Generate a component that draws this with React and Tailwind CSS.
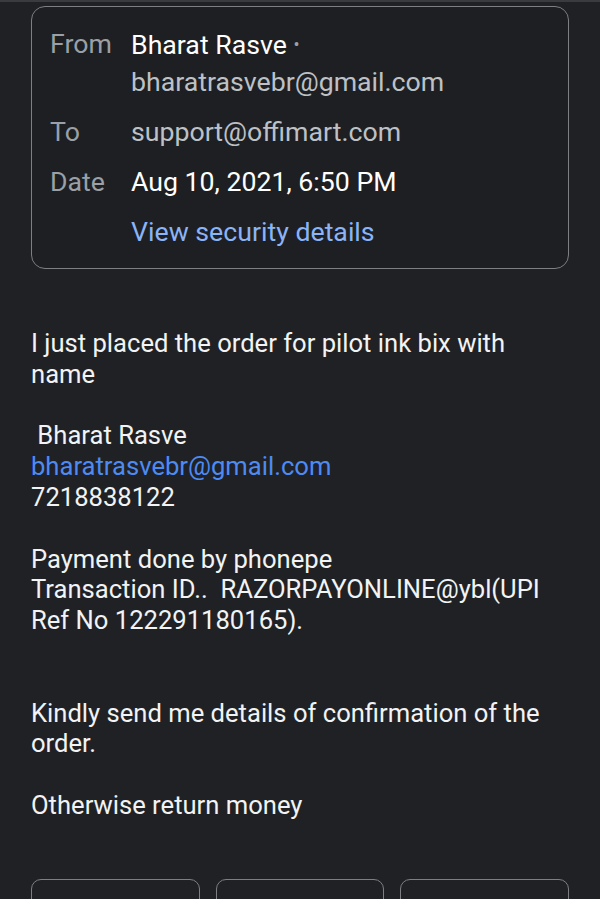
export default function App() {
  return (
    <div className="min-h-[899px] w-[600px] overflow-hidden bg-[#202124] font-['Roboto',sans-serif]">
      <div className="h-[2px] bg-[#3a3b3e]" />
      <div className="px-[31px] pt-[4px]">
        <div className="rounded-[14px] border-[1.5px] border-[#7d7f83] bg-[#1e1f22] pl-[18px] pr-4 pt-[19px] pb-[17px] text-[26.7px]">
          <div className="grid grid-cols-[81px_1fr] gap-y-[13px] leading-[37px]">
            <div className="text-[#9aa0a6]">From</div>
            <div>
              <div className="text-[#ffffff]">
                Bharat Rasve <span className="text-[18px] text-[#9aa0a6] align-[3px]">•</span>
              </div>
              <div className="text-[#bdc1c6]">bharatrasvebr@gmail.com</div>
            </div>
            <div className="text-[#9aa0a6]">To</div>
            <div className="text-[#bdc1c6]">support@offimart.com</div>
            <div className="text-[#9aa0a6]">Date</div>
            <div className="text-[#ffffff]">Aug 10, 2021, 6:50 PM</div>
            <div />
            <div className="text-[#8ab4f8]">View security details</div>
          </div>
        </div>

        <div className="mt-[59px] text-[25.6px] leading-[30.8px] text-[#f1f3f4]">
          <div>I just placed the order for pilot ink bix with name</div>
          <div className="h-[30.8px]" />
          <div>&nbsp;Bharat Rasve</div>
          <div className="text-[#4c8bf5]">bharatrasvebr@gmail.com</div>
          <div>7218838122</div>
          <div className="h-[30.8px]" />
          <div>Payment done by phonepe</div>
          <div>Transaction ID..&nbsp; RAZORPAYONLINE@ybl(UPI Ref No 122291180165).</div>
          <div className="h-[61.6px]" />
          <div>Kindly send me details of confirmation of the order.</div>
          <div className="h-[30.8px]" />
          <div>Otherwise return money</div>
        </div>

        <div className="mt-[58px] grid grid-cols-3 gap-[16px]">
          <div className="h-[60px] rounded-t-[10px] border-[1.5px] border-[#7d7f83]" />
          <div className="h-[60px] rounded-t-[10px] border-[1.5px] border-[#7d7f83]" />
          <div className="h-[60px] rounded-t-[10px] border-[1.5px] border-[#7d7f83]" />
        </div>
      </div>
    </div>
  );
}
